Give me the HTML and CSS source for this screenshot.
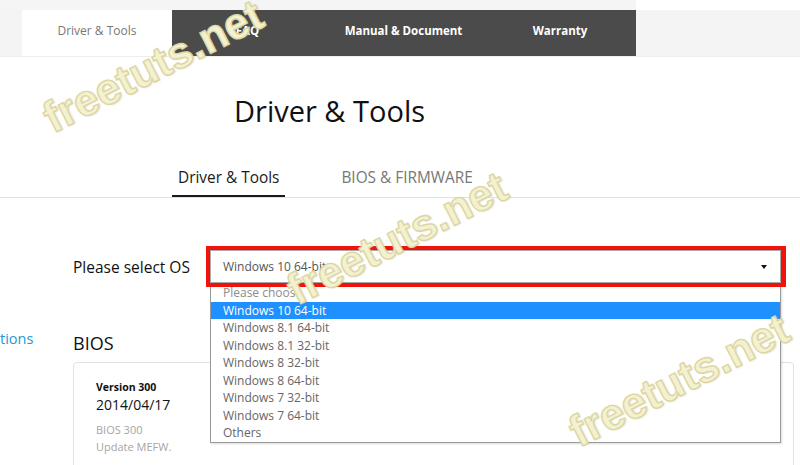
FILE: index.html
```html
<!DOCTYPE html>
<html lang="en">
<head>
<meta charset="utf-8">
<title>Driver &amp; Tools</title>
<link rel="stylesheet" href="styles.css">
</head>
<body>
<div class="page">
  <nav class="topnav">
    <div class="topnav-main">
      <div class="nav-pad"></div>
      <a class="nav-tab nav-tab-active">Driver &amp; Tools</a>
      <div class="nav-dark">
        <a class="nav-tab tab-faq">FAQ</a>
        <a class="nav-tab tab-manual">Manual &amp; Document</a>
        <a class="nav-tab tab-warranty">Warranty</a>
      </div>
    </div>
    <div class="nav-rest"></div>
  </nav>

  <h1 class="title">Driver &amp; Tools</h1>

  <div class="subtabs">
    <span class="subtab subtab-active">Driver &amp; Tools</span>
    <span class="subtab">BIOS &amp; FIRMWARE</span>
  </div>

  <div class="os-row">
    <label class="os-label">Please select OS</label>
    <div class="os-box">
      <div class="select">
        <span class="select-value">Windows 10 64-bit</span>
        <i class="caret"></i>
      </div>
      <ul class="options">
        <li class="option option-placeholder">Please choose</li>
        <li class="option option-selected">Windows 10 64-bit</li>
        <li class="option">Windows 8.1 64-bit</li>
        <li class="option">Windows 8.1 32-bit</li>
        <li class="option">Windows 8 32-bit</li>
        <li class="option">Windows 8 64-bit</li>
        <li class="option">Windows 7 32-bit</li>
        <li class="option">Windows 7 64-bit</li>
        <li class="option">Others</li>
      </ul>
    </div>
  </div>

  <div class="content">
    <div class="side"><a class="side-link">tions</a></div>
    <div class="main">
      <h2 class="section-title">BIOS</h2>
      <div class="card">
        <div class="card-version">Version 300</div>
        <div class="card-date">2014/04/17</div>
        <div class="card-desc">BIOS 300<br>Update MEFW.</div>
      </div>
    </div>
  </div>

  <span class="wm wm-1">freetuts.net</span>
  <span class="wm wm-2">freetuts.net</span>
  <span class="wm wm-3">freetuts.net</span>
</div>
</body>
</html>
```

FILE: styles.css
```css
* { box-sizing: border-box; }

html, body {
  margin: 0;
  padding: 0;
  background: #ffffff;
}

body {
  font-family: "Open Sans", "Noto Sans", sans-serif;
  color: #111;
}

.page {
  position: relative;
  width: 800px;
  height: 465px;
  overflow: hidden;
}

/* ---------- top navigation ---------- */
.topnav {
  display: flex;
  height: 57px;
  border-bottom: 1px solid #eeeeee;
}

.topnav-main {
  display: flex;
  width: 636px;
  padding-top: 10px;
  background: #f5f5f5;
}

.nav-pad {
  width: 22px;
  background: #f4f4f4;
}

.nav-rest {
  flex: 1;
  margin-top: 10px;
  background: #f4f4f4;
}

.nav-dark {
  display: flex;
  background: #4b4b4b;
}

.nav-tab {
  display: flex;
  align-items: center;
  justify-content: center;
  padding-bottom: 4px;
  font-size: 12px;
  line-height: 16px;
  text-decoration: none;
  white-space: nowrap;
}

.nav-tab-active {
  width: 150px;
  background: #ffffff;
  color: #777777;
}

.tab-faq,
.tab-manual,
.tab-warranty {
  color: #ffffff;
  font-weight: 700;
  font-size: 11.5px;
}

.tab-faq { width: 151px; }
.tab-manual { width: 161px; }
.tab-warranty { width: 152px; }

/* ---------- title ---------- */
.title {
  margin: 34px 0 0 234px;
  font-size: 29px;
  line-height: 40px;
  font-weight: 400;
  color: #111;
}

/* ---------- sub tabs ---------- */
.subtabs {
  display: flex;
  gap: 50px;
  margin-top: 37px;
  padding-left: 172px;
  border-bottom: 1px solid #e2e2e2;
}

.subtab {
  padding: 0 6px 7px;
  font-size: 15.4px;
  line-height: 20px;
  color: #777777;
  border-bottom: 2px solid transparent;
  white-space: nowrap;
}

.subtab-active {
  color: #1a1a1a;
  border-bottom-color: #1a1a1a;
}

/* ---------- OS selector ---------- */
.os-row {
  display: flex;
  align-items: center;
  margin-top: 48px;
  padding-left: 73px;
}

.os-label {
  width: 133px;
  font-size: 15.5px;
  color: #111;
  white-space: nowrap;
}

.os-box {
  position: relative;
  width: 580px;
  padding: 4px 5px 4px 4px;
}

.os-box::after {
  content: "";
  position: absolute;
  inset: 0;
  border: 4px solid #f2120c;
  border-right-width: 5px;
  z-index: 3;
  pointer-events: none;
}

.select {
  display: flex;
  align-items: center;
  justify-content: space-between;
  height: 33px;
  padding: 0 13px 0 12px;
  border: 1px solid #a8a8a8;
  background: #ffffff;
}

.select-value {
  font-size: 12px;
  color: #555555;
}

.caret {
  width: 0;
  height: 0;
  border-left: 3px solid transparent;
  border-right: 3px solid transparent;
  border-top: 4px solid #111;
}

.options {
  position: absolute;
  top: 37px;
  left: 4px;
  width: 571px;
  margin: 0;
  padding: 0;
  list-style: none;
  background: #ffffff;
  border: 1px solid #9a9a9a;
  box-shadow: 1px 1px 2px rgba(0, 0, 0, 0.15);
  z-index: 2;
}

.option {
  height: 17.5px;
  line-height: 17.5px;
  padding-left: 12px;
  font-size: 12px;
  color: #666666;
  white-space: nowrap;
}

.option-placeholder {
  color: #8c8c8c;
}

.option-selected {
  background: #1e90ff;
  color: #ffffff;
}

/* ---------- content ---------- */
.content {
  display: flex;
  align-items: flex-start;
  margin-top: 44px;
}

.side {
  width: 73px;
  margin-top: -4px;
}

.side-link {
  font-size: 14.5px;
  line-height: 20px;
  color: #1d9ad8;
  text-decoration: none;
}

.main {
  flex: 1;
  margin-right: 6px;
}

.section-title {
  margin: 0 0 7px;
  font-size: 18px;
  line-height: 24px;
  font-weight: 400;
  color: #111;
}

.card {
  height: 140px;
  padding: 16.5px 22px;
  border: 1px solid #e2e2e2;
  border-radius: 4px;
}

.card-version {
  font-size: 10.5px;
  line-height: 14px;
  font-weight: 700;
  color: #111;
}

.card-date {
  margin-top: 1.5px;
  font-size: 14px;
  line-height: 20px;
  color: #111;
}

.card-desc {
  margin-top: 5.5px;
  font-size: 11px;
  line-height: 17.7px;
  color: #a5a5a5;
}

/* ---------- watermarks ---------- */
.wm {
  position: absolute;
  z-index: 5;
  font-family: "Liberation Sans", Arial, sans-serif;
  font-weight: 700;
  font-size: 44px;
  line-height: 44px;
  white-space: nowrap;
  color: #f3f1d0;
  -webkit-text-stroke: 1.4px #dcd6a4;
  text-shadow: 1px 1px 2px rgba(150, 140, 80, 0.3);
  transform-origin: 0 26px;
  transform: rotate(-27deg);
  pointer-events: none;
}

.wm-1 { left: 48px; top: 98px; }
.wm-2 { left: 292px; top: 270px; }
.wm-3 { left: 574px; top: 412px; }
```
